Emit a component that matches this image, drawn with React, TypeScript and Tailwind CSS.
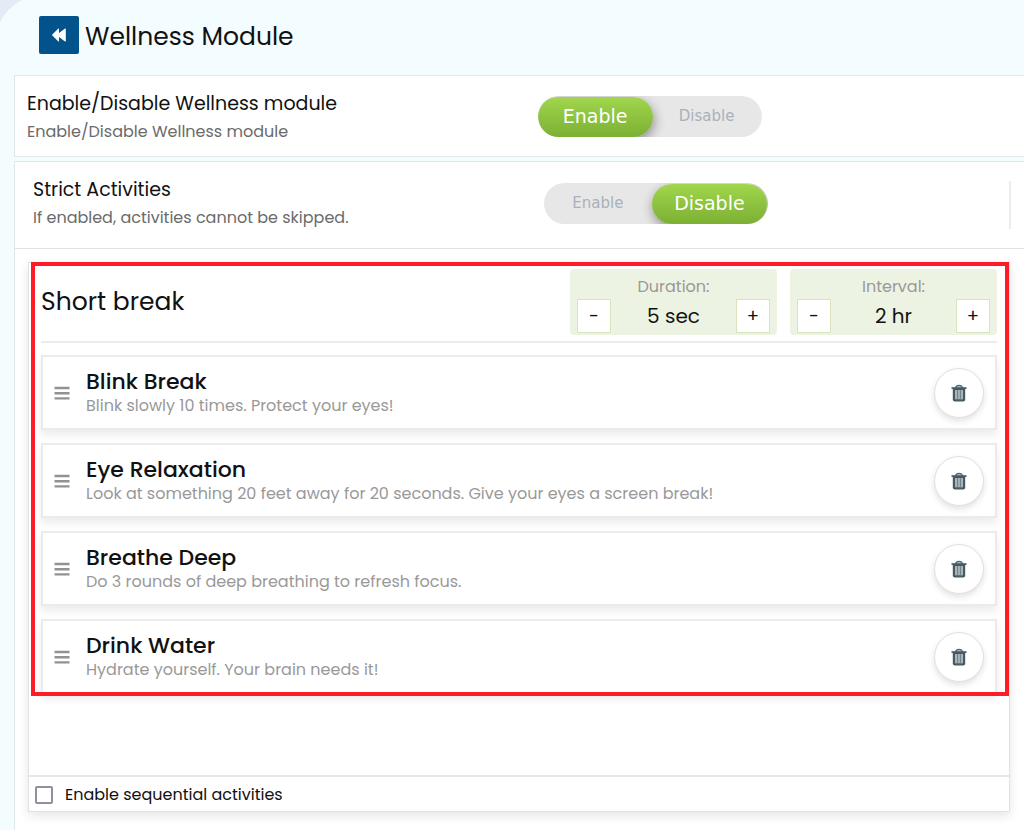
import { useState } from 'react';
import clsx from 'clsx';

interface Activity {
  title: string;
  description: string;
}

const ACTIVITIES: Activity[] = [
  { title: 'Blink Break', description: 'Blink slowly 10 times. Protect your eyes!' },
  {
    title: 'Eye Relaxation',
    description: 'Look at something 20 feet away for 20 seconds. Give your eyes a screen break!',
  },
  { title: 'Breathe Deep', description: 'Do 3 rounds of deep breathing to refresh focus.' },
  { title: 'Drink Water', description: 'Hydrate yourself. Your brain needs it!' },
];

function RewindIcon() {
  return (
    <svg width="14" height="14" viewBox="0 0 14 14" fill="currentColor" aria-hidden="true">
      <path d="M7 .8v4.3L13 .6c.4-.3.8 0 .8.4v12c0 .4-.4.7-.8.4L7 8.9v4.3c0 .3-.4.4-.6.2L.3 7.4a.5.5 0 0 1 0-.8L6.4.6c.2-.2.6-.1.6.2z" />
    </svg>
  );
}

function GripIcon() {
  return (
    <svg width="16" height="14" viewBox="0 0 16 14" fill="#929292" aria-hidden="true">
      <path d="M.5 .8h15v2.4H.5zM.5 6h15v2.4H.5zM.5 11.200h15v2.400H.5z" />
    </svg>
  );
}

function TrashIcon() {
  return (
    <svg width="16" height="18" viewBox="0 0 16 18" fill="none" aria-hidden="true">
      <path d="M1.800 4h12.400v11.500a2 2 0 0 1-2 2H3.800a2 2 0 0 1-2-2z" fill="#455a64" />
      <path d="M4 6h8v9.300H4z" fill="#a9b4b9" />
      <path d="M6.600 6v9.300M9.400 6v9.300" stroke="#6d7e86" strokeWidth="1" />
      <path d="M4.700 3.600C4.900 1.800 6 1.300 8 1.300s3.100.5 3.300 2.300" stroke="#55686f" strokeWidth="1.3" fill="#b4bfc4" />
      <path d="M.5 3.200h15v1.700H.5z" fill="#455a64" />
    </svg>
  );
}

interface ToggleProps {
  label: string;
  initial: boolean;
}

function Toggle({ label, initial }: ToggleProps) {
  const [enabled, setEnabled] = useState(initial);

  return (
    <div
      role="group"
      aria-label={label}
      className="flex h-[41px] w-56 overflow-hidden rounded-full bg-[#e7e7e7] pt-px pr-px font-['DejaVu_Sans',sans-serif]"
    >
      {[true, false].map((option) => (
        <button
          key={String(option)}
          type="button"
          aria-pressed={enabled === option}
          onClick={() => setEnabled(option)}
          className={clsx(
            'h-full rounded-full',
            enabled === option
              ? 'w-[115px] bg-linear-to-b from-[#a2d64d] to-[#7bb033] text-[19px] text-white shadow-[1px_4px_12px_rgba(0,0,0,0.4)]'
              : 'flex-1 text-[15px] text-[#a9b1bb]',
          )}
        >
          {option ? 'Enable' : 'Disable'}
        </button>
      ))}
    </div>
  );
}

interface StepperProps {
  label: string;
  unit: string;
  initial: number;
}

function Stepper({ label, unit, initial }: StepperProps) {
  const [value, setValue] = useState(initial);
  const buttonClass =
    'flex h-[34px] w-[34px] items-center justify-center border border-[#d9e4bd] bg-white text-lg text-[#111]';

  return (
    <div className="w-[207px] rounded bg-[#edf3e2] px-[7px] pt-[5px] pb-[2px]">
      <p className="text-center text-base leading-[25px] text-[#999]">{label}</p>
      <div className="flex items-center justify-between">
        <button
          type="button"
          aria-label={`Decrease ${label}`}
          className={buttonClass}
          onClick={() => setValue(Math.max(1, value - 1))}
        >
          -
        </button>
        <span className="text-xl text-[#111]">
          {value} {unit}
        </span>
        <button
          type="button"
          aria-label={`Increase ${label}`}
          className={buttonClass}
          onClick={() => setValue(value + 1)}
        >
          +
        </button>
      </div>
    </div>
  );
}

function ActivityCard({ title, description }: Activity) {
  return (
    <li className="flex h-[75px] items-center border-2 border-[#ebebeb] bg-white pr-[11px] pl-[11px] shadow-[0_5px_8px_rgba(0,0,0,0.08)]">
      <GripIcon />
      <div className="ml-4 flex-1">
        <h3 className="text-[22px] leading-[26px] font-medium text-[#111]">{title}</h3>
        <p className="text-base leading-[22px] text-[#999]">{description}</p>
      </div>
      <button
        type="button"
        aria-label={`Delete ${title}`}
        className="flex size-[50px] items-center justify-center rounded-full border border-[#e0e0e0] bg-white shadow-[0_3px_6px_rgba(0,0,0,0.12)]"
      >
        <TrashIcon />
      </button>
    </li>
  );
}

export default function App() {
  return (
    <div className="min-h-screen overflow-hidden bg-[#e2ebf6] font-[Poppins,Inter,sans-serif] text-[#111]">
      <div className="-mt-1.5 -ml-1.5 flex min-h-[calc(100vh+6px)] flex-col rounded-tl-[52px] bg-[#f3fcff] pt-1.5 pl-5">
        <header className="flex h-[75px] items-center gap-1.5 pb-1.5 pl-[25px]">
          <button
            type="button"
            aria-label="Back"
            className="flex h-[38px] w-10 items-center justify-center rounded-xs bg-[#02528c] text-white"
          >
            <RewindIcon />
          </button>
          <h1 className="pt-1 text-[25px]">Wellness Module</h1>
        </header>

        <section className="grid h-[82px] grid-cols-[13fr_12fr] items-center border-y border-l border-[#e2e6e6] bg-white pr-1">
          <div className="pt-1 pl-3">
            <h2 className="text-[19px] leading-7">Enable/Disable Wellness module</h2>
            <p className="text-base leading-7 text-[#6b6b6b]">Enable/Disable Wellness module</p>
          </div>
          <Toggle label="Wellness module" initial={true} />
        </section>

        <main className="mt-1 flex-1 border-t border-l border-[#e2e6e6] bg-white">
          <section className="flex h-[87px] items-center border-b border-[#e2e2e2] pr-[13px]">
            <div className="grid flex-1 grid-cols-[13fr_12fr] items-center pb-1">
              <div className="pt-0.5 pl-[18px]">
                <h2 className="text-[19px] leading-7">Strict Activities</h2>
                <p className="text-base leading-7 text-[#6b6b6b]">
                  If enabled, activities cannot be skipped.
                </p>
              </div>
              <div className="pl-3">
                <Toggle label="Strict activities" initial={false} />
              </div>
            </div>
            <div className="h-12 w-0.5 bg-[#ececec]" />
          </section>

          <section className="relative mt-[13px] mr-[14px] mb-4 ml-[13px] border border-[#e2e2e2] shadow-[0_4px_10px_rgba(0,0,0,0.1)]">
            <div className="pt-1.5 pr-3 pl-3">
              <div className="flex items-center gap-[13px] border-b-2 border-[#ececec] pb-1.5">
                <h2 className="flex-1 text-[25px]">Short break</h2>
                <Stepper label="Duration:" unit="sec" initial={5} />
                <Stepper label="Interval:" unit="hr" initial={2} />
              </div>
              <ul className="mt-3 flex flex-col gap-[13px]">
                {ACTIVITIES.map((activity) => (
                  <ActivityCard key={activity.title} {...activity} />
                ))}
              </ul>
            </div>
            <label className="mt-[81px] flex h-9 items-center gap-3 border-t-2 border-[#e7e7e7] pt-px pl-1.5 text-base">
              <input
                type="checkbox"
                className="size-[18px] appearance-none rounded-xs border-2 border-[#8f8f9d] bg-white checked:bg-[#8f8f9d]"
              />
              Enable sequential activities
            </label>
            {/* highlight frame around the short break list */}
            <div className="pointer-events-none absolute -top-px right-0 bottom-[115px] left-0.5 border-4 border-[#ff1c27]" />
          </section>
        </main>
      </div>
    </div>
  );
}
